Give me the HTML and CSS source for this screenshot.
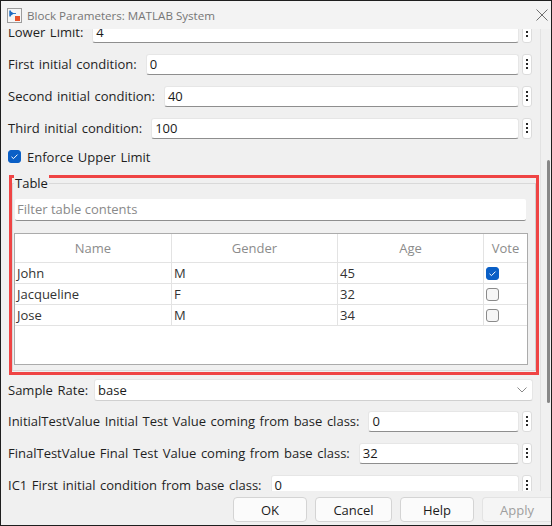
FILE: index.html
```html
<!DOCTYPE html>
<html>
<head>
<meta charset="utf-8">
<link rel="stylesheet" href="styles.css">
</head>
<body>
<div class="window">
  <div class="titlebar">
    <svg class="app-icon" width="15" height="15" viewBox="0 0 15 15">
      <rect x="0.5" y="0.5" width="14" height="14" fill="#f6f6f6" stroke="#9c9c9c"/>
      <path d="M2.5 2.5 L2.5 8.5 L4 8.5 L4 6 L9 6 L9 5 L4 5 L4 2.5 Z" fill="#2f7fd0"/>
      <path d="M2.5 2.5 L7 5.5 L2.5 8.5 Z" fill="#1e6cc0"/>
      <rect x="8" y="8" width="5" height="5" fill="#e8542c"/>
    </svg>
    <span class="title">Block Parameters: MATLAB System</span>
    <svg class="close" width="12" height="12" viewBox="0 0 12 12">
      <path d="M0.5 0.5 L11.5 11.5 M11.5 0.5 L0.5 11.5" stroke="#6f6f6f" stroke-width="1"/>
    </svg>
  </div>
  <div class="main">
    <div class="pane">
      <div class="content">
        <div class="row first">
          <span class="label">Lower Limit:</span>
          <div class="field">4</div>
          <div class="more"><i></i><i></i><i></i></div>
        </div>
        <div class="row">
          <span class="label">First initial condition:</span>
          <div class="field">0</div>
          <div class="more"><i></i><i></i><i></i></div>
        </div>
        <div class="row">
          <span class="label">Second initial condition:</span>
          <div class="field">40</div>
          <div class="more"><i></i><i></i><i></i></div>
        </div>
        <div class="row">
          <span class="label">Third initial condition:</span>
          <div class="field">100</div>
          <div class="more"><i></i><i></i><i></i></div>
        </div>
        <div class="check-row">
          <span class="checkbox checked"><svg width="13" height="13" viewBox="0 0 13 13"><path d="M3.5 6.8 L5.5 8.6 L9.5 4.6" fill="none" stroke="#ffffff" stroke-width="1"/></svg></span>
          <span class="label">Enforce Upper Limit</span>
        </div>
        <div class="highlight">
          <div class="group">
            <span class="group-label">Table</span>
            <div class="filter">Filter table contents</div>
            <div class="table">
              <div class="tr head">
                <div class="td">Name</div>
                <div class="td">Gender</div>
                <div class="td">Age</div>
                <div class="td">Vote</div>
              </div>
              <div class="tr">
                <div class="td">John</div>
                <div class="td">M</div>
                <div class="td">45</div>
                <div class="td"><span class="checkbox checked small"><svg width="13" height="13" viewBox="0 0 13 13"><path d="M3.5 6.8 L5.5 8.6 L9.5 4.6" fill="none" stroke="#ffffff" stroke-width="1"/></svg></span></div>
              </div>
              <div class="tr">
                <div class="td">Jacqueline</div>
                <div class="td">F</div>
                <div class="td">32</div>
                <div class="td"><span class="checkbox small"></span></div>
              </div>
              <div class="tr">
                <div class="td">Jose</div>
                <div class="td">M</div>
                <div class="td">34</div>
                <div class="td"><span class="checkbox small"></span></div>
              </div>
            </div>
          </div>
        </div>
        <div class="row select-row">
          <span class="label">Sample Rate:</span>
          <div class="field select">base
            <svg class="chev" width="10" height="6" viewBox="0 0 10 6"><path d="M0.5 0.5 L5 5 L9.5 0.5" fill="none" stroke="#8a8a8a" stroke-width="1"/></svg>
          </div>
        </div>
        <div class="row">
          <span class="label">InitialTestValue Initial Test Value coming from base class:</span>
          <div class="field">0</div>
          <div class="more"><i></i><i></i><i></i></div>
        </div>
        <div class="row">
          <span class="label">FinalTestValue Final Test Value coming from base class:</span>
          <div class="field">32</div>
          <div class="more"><i></i><i></i><i></i></div>
        </div>
        <div class="row">
          <span class="label">IC1 First initial condition from base class:</span>
          <div class="field">0</div>
          <div class="more"><i></i><i></i><i></i></div>
        </div>
      </div>
    </div>
    <div class="scrollbar"><div class="thumb"></div></div>
  </div>
  <div class="buttons">
    <button class="btn ok">OK</button>
    <button class="btn cancel">Cancel</button>
    <button class="btn help">Help</button>
    <button class="btn apply">Apply</button>
  </div>
</div>
</body>
</html>
```
FILE: styles.css
```css
html, body {
  margin: 0;
  padding: 0;
}
body {
  width: 552px;
  height: 526px;
  overflow: hidden;
  font-family: "Open Sans", "Noto Sans", sans-serif;
  font-size: 13px;
  color: #1f1f1f;
}
.window {
  box-sizing: border-box;
  width: 552px;
  height: 526px;
  border: 1px solid #1e1e1e;
  background: #f0f0f0;
  display: flex;
  flex-direction: column;
  overflow: hidden;
}
.titlebar {
  height: 28px;
  flex: none;
  background: #f3f3f3;
  display: flex;
  align-items: center;
  padding-left: 6px;
  position: relative;
  z-index: 2;
}
.app-icon {
  flex: none;
}
.title {
  margin-left: 5px;
  font-size: 11.6px;
  color: #767676;
  flex: 1;
}
.close {
  flex: none;
  margin-right: 3px;
}
.main {
  flex: 1;
  display: flex;
  min-height: 0;
}
.pane {
  flex: 1;
  overflow: hidden;
}
.content {
  display: flex;
  flex-direction: column;
}
.row {
  display: flex;
  align-items: center;
  height: 32px;
  flex: none;
  padding: 0 8px 0 7px;
}
.row.first {
  margin-top: -13px;
}
.label {
  white-space: nowrap;
  margin-right: 9px;
  word-spacing: 1.2px;
}
.field {
  flex: 1;
  box-sizing: border-box;
  height: 21px;
  background: #ffffff;
  border: 1px solid #e6e6e6;
  border-bottom: 1px solid #8e8e8e;
  border-radius: 3px;
  padding: 0 3px;
  line-height: 19px;
  color: #1a1a1a;
  white-space: nowrap;
}
.more {
  flex: none;
  box-sizing: border-box;
  width: 10px;
  height: 21px;
  margin-left: 3px;
  background: #ffffff;
  border: 1px solid #dcdcdc;
  border-radius: 3px;
  display: flex;
  flex-direction: column;
  align-items: center;
  justify-content: center;
  gap: 2px;
}
.more i {
  display: block;
  width: 2px;
  height: 2px;
  background: #2a2a2a;
}
.check-row {
  display: flex;
  align-items: center;
  height: 25px;
  padding-left: 7px;
}
.check-row .label {
  margin-left: 6px;
}
.checkbox {
  box-sizing: border-box;
  width: 13px;
  height: 13px;
  border-radius: 3px;
  border: 1px solid #8a8a8a;
  background: #f6f6f6;
  display: inline-block;
  flex: none;
  position: relative;
}
.checkbox svg {
  position: absolute;
  left: -1px;
  top: -1px;
}
.checkbox.checked {
  background: #0a5fc6;
  border-color: #0a5fc6;
}
.highlight {
  box-sizing: border-box;
  height: 200px;
  margin: 6px 1px 0 8px;
  border: 3px solid #ef4444;
  display: flex;
  flex-direction: column;
}
.group {
  box-sizing: border-box;
  height: 188px;
  margin-top: 5px;
  border: 1px solid #d9d9d9;
  border-right-color: #d0d0d0;
  position: relative;
  display: flex;
  flex-direction: column;
}
.group-label {
  position: absolute;
  top: -10px;
  left: 1px;
  padding: 0 1px;
  background: #f0f0f0;
  color: #1a1a1a;
  line-height: 18px;
}
.filter {
  box-sizing: border-box;
  height: 22px;
  margin: 15px 9px 0 2px;
  background: #ffffff;
  border-bottom: 1px solid #8e8e8e;
  border-radius: 2px;
  color: #8a8a8a;
  padding: 0 2px;
  line-height: 21px;
}
.table {
  box-sizing: border-box;
  height: 132px;
  margin: 12px 7px 0 1px;
  background: #ffffff;
  border: 1px solid #ababab;
}
.tr {
  display: grid;
  grid-template-columns: 157px 166px 146px 1fr;
  height: 21px;
  box-sizing: border-box;
  border-bottom: 1px solid #e3e3e3;
}
.tr.head {
  height: 29px;
}
.td {
  box-sizing: border-box;
  border-right: 1px solid #e3e3e3;
  padding: 0 2px;
  line-height: 20px;
  color: #333333;
  white-space: nowrap;
  display: flex;
  align-items: center;
}
.td:last-child {
  border-right: none;
}
.tr.head .td {
  justify-content: center;
  color: #8c8c8c;
}
.select-row {
  height: 30px;
  padding-right: 7px;
}
.select-row .label {
  margin-right: 6px;
}
.field.select {
  height: 22px;
  display: flex;
  align-items: center;
  justify-content: space-between;
  border-color: #e6e6e6;
  border-bottom-color: #d0d0d0;
  padding-right: 5px;
}
.scrollbar {
  flex: none;
  width: 11px;
  box-sizing: border-box;
  border-left: 1px solid #e2e2e2;
  padding-top: 131px;
  padding-left: 6px;
}
.thumb {
  width: 3px;
  height: 243px;
  background: #878787;
  border-radius: 2px;
}
.buttons {
  height: 34px;
  flex: none;
  display: flex;
  justify-content: flex-end;
  align-items: flex-start;
  gap: 8px;
  padding-top: 6px;
  box-sizing: border-box;
}
.btn {
  box-sizing: border-box;
  height: 25px;
  font-family: "Open Sans", "Noto Sans", sans-serif;
  font-size: 13px;
  color: #1b1b1b;
  background: #fbfbfb;
  border: 1px solid #d4d4d4;
  border-radius: 4px;
  padding: 0;
}
.ok { width: 74px; }
.cancel { width: 77px; }
.help { width: 74px; }
.apply {
  width: 69px;
  color: #9e9e9e;
  background: #f5f5f5;
  border-color: #e3e3e3;
  border-right: none;
  border-radius: 4px 0 0 4px;
}
```
